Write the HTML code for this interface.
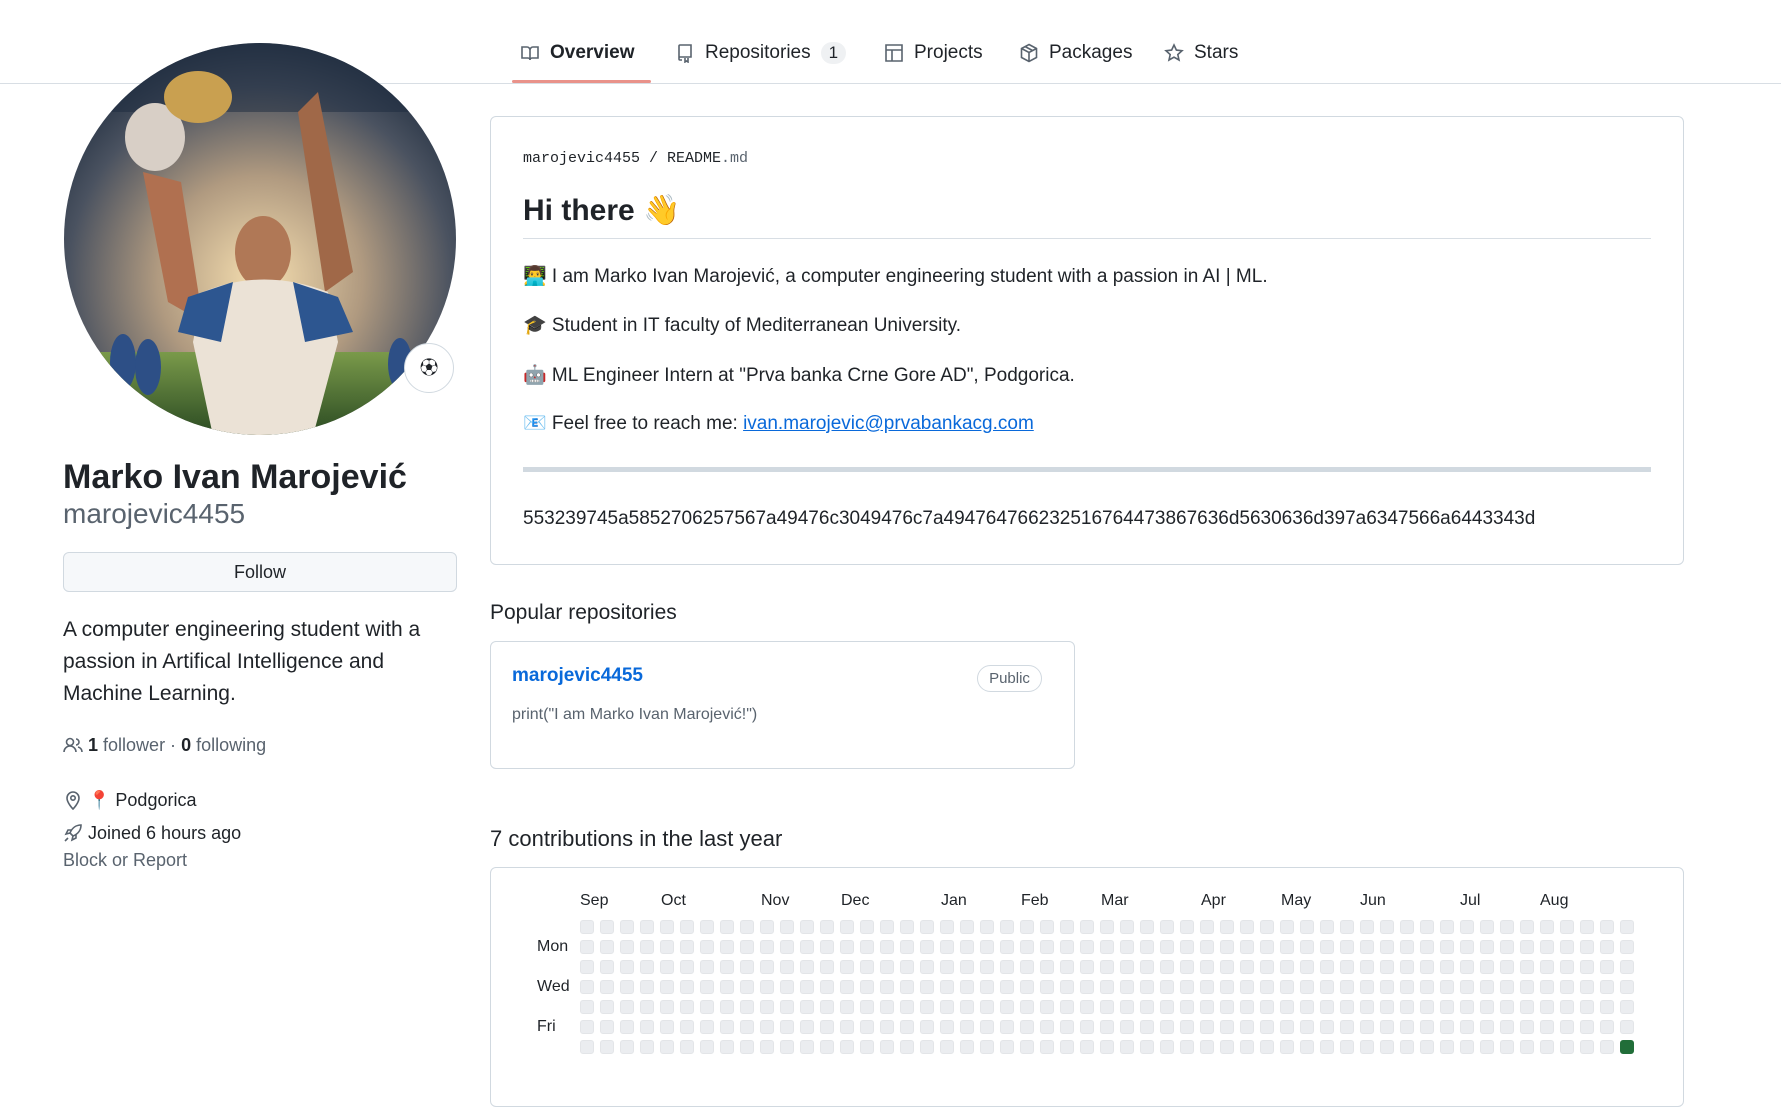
<!DOCTYPE html>
<html><head><meta charset="utf-8"><style>
*{margin:0;padding:0;box-sizing:border-box}
body{width:1781px;height:1061px;overflow:hidden;background:#fff;font-family:"Liberation Sans","Noto Sans CJK SC",sans-serif;color:#1f2328;position:relative}
.a{position:absolute;white-space:nowrap}
.tab{position:absolute;top:42px;font-size:19px;color:#1f2328;display:flex;align-items:center;gap:10px}
.tab svg{width:20px;height:20px;fill:none;stroke:#59636e;stroke-width:1.6}
.mono{font-family:"Liberation Mono",monospace}
.cell{position:absolute;width:14px;height:14px;border-radius:3px;background:#ebedf0;border:1px solid #e3e5e8}
.ic{fill:none;stroke:#59636e;stroke-width:1.6;vertical-align:-4px}
</style></head><body>
<div class="a" style="left:0;top:83px;width:1781px;height:1px;background:#d8dee4"></div>
<div class="a" style="left:512px;top:80px;width:139px;height:3px;background:#e9928a;border-radius:2px"></div>
<div class="tab" style="left:520px"><svg viewBox="0 0 20 20"><path d="M2 4h5a3 3 0 0 1 3 3v10a2 2 0 0 0-2-2H2zM18 4h-5a3 3 0 0 0-3 3v10a2 2 0 0 1 2-2h6z"/></svg><b>Overview</b></div>
<div class="tab" style="left:675px"><svg viewBox="0 0 20 20"><path d="M4 16V3a1 1 0 0 1 1-1h11v12H5a1 1 0 0 0-1 1v1a1 1 0 0 0 1 1h2M10 15v4l1.5-1 1.5 1v-4"/></svg>Repositories <span style="background:#eff1f3;border-radius:12px;padding:1px 8px;font-size:17px">1</span></div>
<div class="tab" style="left:884px"><svg viewBox="0 0 20 20"><path d="M2 2h16v16H2zM2 7h16M8 7v11"/></svg>Projects</div>
<div class="tab" style="left:1019px"><svg viewBox="0 0 20 20"><path d="M10 1.5l7.5 4v9L10 18.5l-7.5-4v-9zM2.5 5.5L10 9.5l7.5-4M10 9.5v9M6 3.5l7.5 4"/></svg>Packages</div>
<div class="tab" style="left:1164px"><svg viewBox="0 0 20 20"><path d="M10 2l2.4 5.1 5.6.6-4.2 3.8 1.2 5.5L10 14.2 5 17l1.2-5.5L2 7.7l5.6-.6z"/></svg>Stars</div>

<svg class="a" style="left:63px;top:42px" width="394" height="394" viewBox="0 0 394 394">
<defs><clipPath id="c"><circle cx="197" cy="197" r="196"/></clipPath>
<radialGradient id="g1" cx="0.5" cy="0.6" r="0.65"><stop offset="0" stop-color="#f6dfb0"/><stop offset="0.4" stop-color="#b09a80"/><stop offset="0.75" stop-color="#4a5260"/><stop offset="1" stop-color="#1c2a3c"/></radialGradient>
<linearGradient id="gr" x1="0" y1="0" x2="0" y2="1"><stop offset="0" stop-color="#7a9a4a"/><stop offset="1" stop-color="#2a4a22"/></linearGradient></defs>
<g clip-path="url(#c)">
<rect width="394" height="394" fill="url(#g1)"/>
<rect y="0" width="394" height="70" fill="#1b2a3e" opacity=".5"/>
<rect y="310" width="394" height="84" fill="url(#gr)"/>
<path d="M80 130 L105 260 L140 280 L118 140 Z" fill="#b07050"/>
<path d="M255 50 L290 230 L262 250 L235 70 Z" fill="#a06848"/>
<ellipse cx="92" cy="95" rx="30" ry="34" fill="#d8cfc6"/>
<ellipse cx="135" cy="55" rx="34" ry="26" fill="#c9a050"/>
<ellipse cx="200" cy="210" rx="28" ry="36" fill="#b07856"/>
<path d="M140 250 Q200 225 265 250 L275 300 L250 394 L150 394 L130 300 Z" fill="#ebe2d6"/>
<path d="M125 255 L170 240 L158 300 L115 290 Z" fill="#2d5690"/>
<path d="M275 255 L230 240 L242 300 L290 290 Z" fill="#2d5690"/>
<ellipse cx="60" cy="320" rx="13" ry="28" fill="#2d4f86"/>
<ellipse cx="85" cy="325" rx="13" ry="28" fill="#2d4f86"/>
<ellipse cx="337" cy="322" rx="12" ry="26" fill="#2d4f86"/>
</g></svg>
<div class="a" style="left:404px;top:343px;width:50px;height:50px;border-radius:50%;background:#fff;border:1px solid #d1d9e0;font-size:18px;line-height:48px;text-align:center">⚽</div>

<div class="a" style="left:63px;top:458px;font-size:34px;font-weight:bold">Marko Ivan Marojević</div>
<div class="a" style="left:63px;top:498px;font-size:28px;color:#59636e">marojevic4455</div>
<div class="a" style="left:63px;top:552px;width:394px;height:40px;border:1px solid #d1d9e0;border-radius:6px;background:#f6f8fa;text-align:center;line-height:38px;font-size:18px">Follow</div>
<div class="a" style="left:63px;top:614px;font-size:21px;line-height:32px;white-space:normal;width:400px">A computer engineering student with a passion in Artifical Intelligence and Machine Learning.</div>
<div class="a" style="left:63px;top:735px;font-size:18px;color:#59636e"><svg class="ic" width="20" height="20" viewBox="0 0 20 20"><circle cx="7" cy="7" r="3.5"/><path d="M1 17a6 6 0 0 1 12 0M13 4a3 3 0 0 1 0 6M15 12a5 5 0 0 1 4 5"/></svg> <b style="color:#1f2328">1</b> follower · <b style="color:#1f2328">0</b> following</div>
<div class="a" style="left:63px;top:790px;font-size:18px"><svg class="ic" width="20" height="20" viewBox="0 0 20 20"><path d="M10 19s6-6 6-11a6 6 0 0 0-12 0c0 5 6 11 6 11z"/><circle cx="10" cy="8" r="2.2"/></svg> 📍 Podgorica</div>
<div class="a" style="left:63px;top:823px;font-size:18px"><svg class="ic" width="20" height="20" viewBox="0 0 20 20"><path d="M18 2c-5 0-9 3-11 8l3 3c5-2 8-6 8-11zM7 10l-4 1 2-4h4M10 13l-1 4 4-2v-4M5 15l-3 3"/></svg> Joined 6 hours ago</div>
<div class="a" style="left:63px;top:850px;font-size:18px;color:#59636e">Block or Report</div>

<div class="a" style="left:490px;top:116px;width:1194px;height:449px;border:1px solid #d1d9e0;border-radius:6px"></div>
<div class="a mono" style="left:523px;top:150px;font-size:15px">marojevic4455 / README<span style="color:#59636e">.md</span></div>
<div class="a" style="left:523px;top:193px;font-size:30px;font-weight:bold">Hi there 👋</div>
<div class="a" style="left:523px;top:238px;width:1128px;height:1px;background:#d8dee4"></div>
<div class="a" style="left:523px;top:264px;font-size:19px">👨‍💻 I am Marko Ivan Marojević, a computer engineering student with a passion in AI | ML.</div>
<div class="a" style="left:523px;top:313px;font-size:19px">🎓 Student in IT faculty of Mediterranean University.</div>
<div class="a" style="left:523px;top:363px;font-size:19px">🤖 ML Engineer Intern at "Prva banka Crne Gore AD", Podgorica.</div>
<div class="a" style="left:523px;top:411px;font-size:19px">📧 Feel free to reach me: <span style="color:#0969da;text-decoration:underline">ivan.marojevic@prvabankacg.com</span></div>
<div class="a" style="left:523px;top:467px;width:1128px;height:5px;background:#d1d9e0"></div>
<div class="a" style="left:523px;top:508px;font-size:19px">553239745a5852706257567a49476c3049476c7a494764766232516764473867636d5630636d397a6347566a6443343d</div>

<div class="a" style="left:490px;top:601px;font-size:21px">Popular repositories</div>
<div class="a" style="left:490px;top:641px;width:585px;height:128px;border:1px solid #d1d9e0;border-radius:6px"></div>
<div class="a" style="left:512px;top:665px;font-size:19px;font-weight:bold;color:#0969da">marojevic4455</div>
<div class="a" style="left:977px;top:665px;width:65px;height:27px;border:1px solid #d1d9e0;border-radius:14px;font-size:15px;color:#59636e;text-align:center;line-height:25px">Public</div>
<div class="a" style="left:512px;top:706px;font-size:16px;color:#59636e">print("I am Marko Ivan Marojević!")</div>

<div class="a" style="left:490px;top:826px;font-size:22px">7 contributions in the last year</div>
<div class="a" style="left:490px;top:867px;width:1194px;height:240px;border:1px solid #d1d9e0;border-radius:6px"></div>
<div class="a" style="left:580px;top:892px;font-size:16px">Sep</div>
<div class="a" style="left:661px;top:892px;font-size:16px">Oct</div>
<div class="a" style="left:761px;top:892px;font-size:16px">Nov</div>
<div class="a" style="left:841px;top:892px;font-size:16px">Dec</div>
<div class="a" style="left:941px;top:892px;font-size:16px">Jan</div>
<div class="a" style="left:1021px;top:892px;font-size:16px">Feb</div>
<div class="a" style="left:1101px;top:892px;font-size:16px">Mar</div>
<div class="a" style="left:1201px;top:892px;font-size:16px">Apr</div>
<div class="a" style="left:1281px;top:892px;font-size:16px">May</div>
<div class="a" style="left:1360px;top:892px;font-size:16px">Jun</div>
<div class="a" style="left:1460px;top:892px;font-size:16px">Jul</div>
<div class="a" style="left:1540px;top:892px;font-size:16px">Aug</div>
<div class="a" style="left:537px;top:938px;font-size:16px">Mon</div>
<div class="a" style="left:537px;top:978px;font-size:16px">Wed</div>
<div class="a" style="left:537px;top:1018px;font-size:16px">Fri</div>
<div id="g"></div>
<script>
var h='';for(var c=0;c<53;c++)for(var r=0;r<7;r++){var g=(c==52&&r==6);h+='<div class="cell" style="left:'+(580+c*20)+'px;top:'+(920+r*20)+'px'+(g?';background:#216e39;border-color:#216e39':'')+'"></div>';}
document.getElementById('g').innerHTML=h;
</script>
</body></html>
